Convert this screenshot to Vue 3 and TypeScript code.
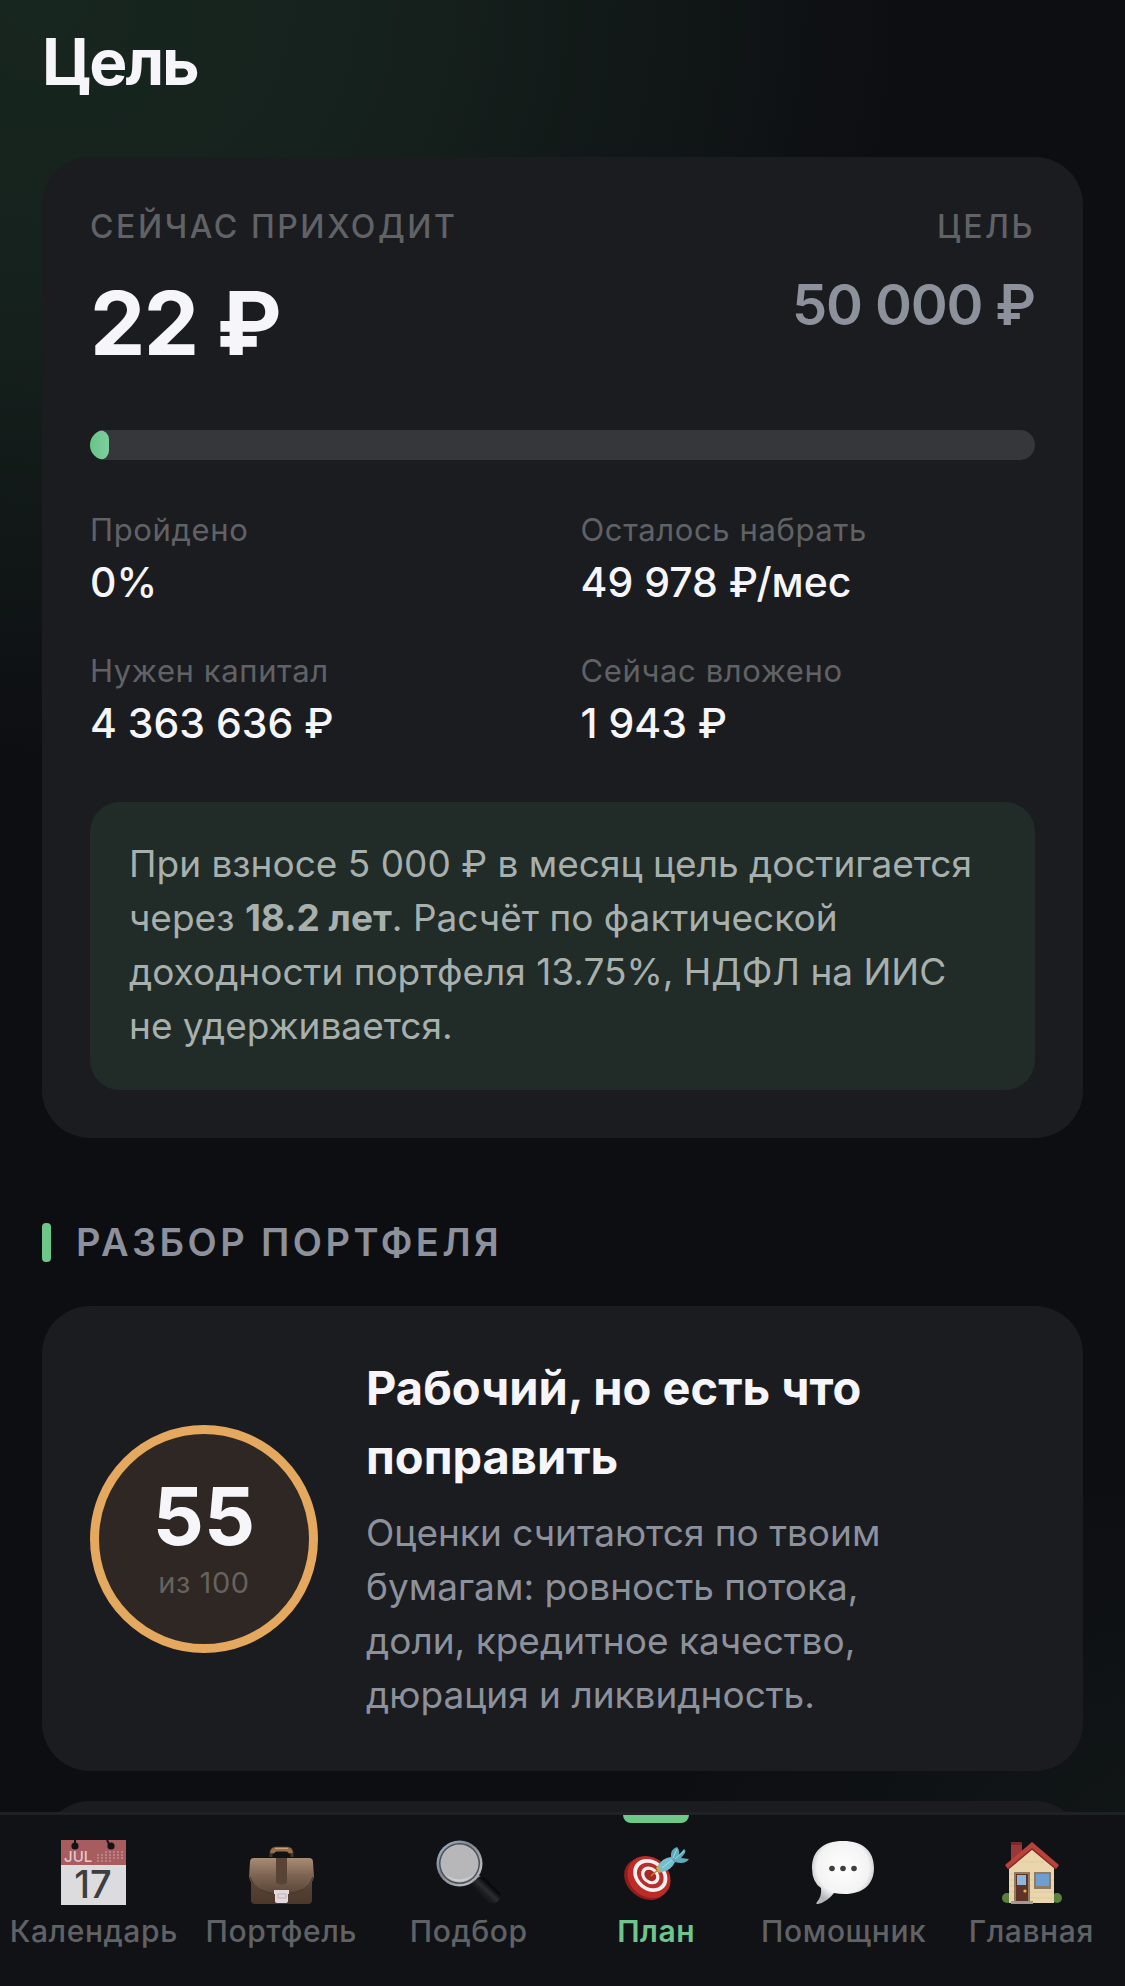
<script setup lang="ts">
interface Stat {
  label: string
  value: string
}

interface Tab {
  id: string
  label: string
  active?: boolean
}

const progress = 2

const stats: Stat[] = [
  { label: 'Пройдено', value: '0%' },
  { label: 'Осталось набрать', value: '49\u00a0978\u00a0₽/мес' },
  { label: 'Нужен капитал', value: '4\u00a0363\u00a0636\u00a0₽' },
  { label: 'Сейчас вложено', value: '1\u00a0943\u00a0₽' },
]

const tabs: Tab[] = [
  { id: 'calendar', label: 'Календарь' },
  { id: 'portfolio', label: 'Портфель' },
  { id: 'search', label: 'Подбор' },
  { id: 'plan', label: 'План', active: true },
  { id: 'assistant', label: 'Помощник' },
  { id: 'home', label: 'Главная' },
]
</script>

<template>
  <div class="app">
    <main class="content">
      <h1 class="title">Цель</h1>

      <section class="card goal">
        <div class="goal-head">
          <div>
            <div class="caption">Сейчас приходит</div>
            <div class="now">22&nbsp;₽</div>
          </div>
          <div class="goal-target">
            <div class="caption">Цель</div>
            <div class="target">50&nbsp;000&nbsp;₽</div>
          </div>
        </div>
        <div class="track" role="progressbar" :aria-valuenow="progress" aria-valuemin="0" aria-valuemax="100">
          <div class="fill" :style="{ width: progress + '%' }"></div>
        </div>
        <dl class="stats">
          <div v-for="s in stats" :key="s.label">
            <dt>{{ s.label }}</dt>
            <dd>{{ s.value }}</dd>
          </div>
        </dl>
        <p class="note">
          При взносе 5&nbsp;000&nbsp;₽ в месяц цель достигается через <b>18.2 лет</b>. Расчёт по фактической
          доходности портфеля 13.75%, НДФЛ на ИИС не&nbsp;удерживается.
        </p>
      </section>

      <h2 class="section-title">Разбор портфеля</h2>

      <section class="card review">
        <div class="score">
          <span class="score-value">55</span>
          <span class="score-max">из 100</span>
        </div>
        <div class="review-text">
          <h3>Рабочий, но есть что поправить</h3>
          <p>Оценки считаются по твоим бумагам: ровность потока, доли, кредитное качество, дюрация и ликвидность.</p>
        </div>
      </section>

      <section class="card next"></section>
    </main>

    <nav class="tabs">
      <a v-for="t in tabs" :key="t.id" href="#" class="tab" :class="{ active: t.active }">
        <svg v-if="t.id === 'calendar'" class="icon" viewBox="0 0 65 65" aria-hidden="true">
          <rect width="65" height="65" fill="#dcdcde" />
          <rect width="65" height="25" fill="#a75c60" />
          <path d="M14 0v6M46 0l3 6" stroke="#1a1416" stroke-width="2" />
          <circle cx="14" cy="6" r="3.6" fill="#151214" />
          <circle cx="50" cy="6" r="3.6" fill="#151214" />
          <text x="3" y="22" font-size="15" fill="#e3c9cb">JUL</text>
          <path
            d="M44 12h18M36 15h26M36 18h26M36 21h14"
            stroke="#c58d90"
            stroke-width="1.4"
            stroke-dasharray="2 2"
          />
          <text x="32" y="58" font-size="38" font-weight="500" text-anchor="middle" fill="#3e3e40">17</text>
        </svg>

        <svg v-else-if="t.id === 'portfolio'" class="icon" viewBox="0 0 65 65" aria-hidden="true">
          <defs>
            <linearGradient id="bag" x1="0" y1="0" x2="0" y2="1">
              <stop offset="0" stop-color="#a88d75" />
              <stop offset=".5" stop-color="#7b6350" />
              <stop offset="1" stop-color="#5a4538" />
            </linearGradient>
            <linearGradient id="bagBody" x1="0" y1="0" x2="0" y2="1">
              <stop offset="0" stop-color="#644e40" />
              <stop offset="1" stop-color="#4b382c" />
            </linearGradient>
          </defs>
          <path d="M22 17v-4q0-5 5-5h11q5 0 5 5v4" fill="none" stroke="#4a3424" stroke-width="3" />
          <path d="M21 13q1-6 6-6h11q5 0 6 6l-4 .5q-1-2-3-2h-9q-2 0-3 2z" fill="#94704f" />
          <path d="M26 8.500h13" stroke="#c9a27b" stroke-width="1" />
          <path d="M2 24h61v36q0 4-4 4H6q-4 0-4-4z" fill="url(#bagBody)" />
          <path d="M5 18h55q4 0 4 4l1 15q-4 16-31 17h-4Q4 53 0 37l1-15q0-4 4-4z" fill="url(#bag)" />
          <path d="M1 37q4 16 29 17h4q26-1 30-17" fill="none" stroke="#463429" stroke-width="1" />
          <path d="M27 18h11v25q-5 3-11 0z" fill="#594335" />
          <path d="M25 50h15v4h-1v7q0 2-3 2h-7q-3 0-3-2v-7h-1z" fill="#e2d9dd" />
          <path d="M29 54h8v4h-8z" fill="none" stroke="#bdb2b8" stroke-width="1" />
        </svg>

        <svg v-else-if="t.id === 'search'" class="icon" viewBox="0 0 65 65" aria-hidden="true">
          <defs>
            <linearGradient id="rim" x1="0" y1="0" x2="1" y2="1">
              <stop offset="0" stop-color="#a5bbd6" />
              <stop offset=".4" stop-color="#7d8791" />
              <stop offset=".8" stop-color="#b9babf" />
              <stop offset="1" stop-color="#5a5b60" />
            </linearGradient>
            <linearGradient id="grip" x1=".2" y1=".8" x2=".8" y2=".2">
              <stop offset="0" stop-color="#5a5a5d" />
              <stop offset=".25" stop-color="#161719" />
              <stop offset=".5" stop-color="#2c2d31" />
              <stop offset=".75" stop-color="#08080a" />
              <stop offset="1" stop-color="#1c1d20" />
            </linearGradient>
          </defs>
          <path d="M38 39l5-4 4 4-6 6z" fill="#85868b" />
          <path d="M43 37q3-2 7 1l13 14q4 4 0 8-4 5-9 3L37 46q-2-3 0-5z" fill="url(#grip)" />
          <circle cx="23.500" cy="23.500" r="23" fill="url(#rim)" />
          <circle cx="23.500" cy="23.500" r="20.500" fill="#4b4f56" />
          <circle cx="23.500" cy="23.500" r="19" fill="#b7b7ba" />
          <path d="M9 34a18 18 0 0 0 29 0A22 22 0 0 1 9 34z" fill="#cececf" />
        </svg>

        <svg v-else-if="t.id === 'plan'" class="icon" viewBox="0 0 65 65" aria-hidden="true">
          <g transform="rotate(40 25 37)">
            <ellipse cx="24" cy="41" rx="23.500" ry="18.500" fill="#8f1d1b" />
            <ellipse cx="25" cy="37" rx="23" ry="19.500" fill="#bd2b27" />
            <ellipse cx="25" cy="35" rx="18.500" ry="15" fill="#f4eff0" />
            <ellipse cx="25" cy="35" rx="14.500" ry="11.500" fill="#b72f2c" />
            <ellipse cx="25" cy="35" rx="10" ry="8" fill="#f4eff0" />
            <ellipse cx="25" cy="35" rx="6.500" ry="5" fill="#a72925" />
          </g>
          <path d="M27 36l9-8" stroke="#b98a30" stroke-width="1.500" />
          <path d="M32 28l3-4 5 7-5 2z" fill="#d7a43b" />
          <path d="M34 26q4-8 13-9l4 5q-4 9-14 10z" fill="#72c0ce" />
          <path d="M47 18q-1-9 6-11 3 3 2 8l5-6q2 1 1 4l-4 5 8 1q-4 6-14 3z" fill="#5faabb" />
          <path d="M49 18l4-9M51 19l9-8M38 28l10-8" fill="none" stroke="#a3dde4" stroke-width="1" />
        </svg>

        <svg v-else-if="t.id === 'assistant'" class="icon" viewBox="0 0 65 65" aria-hidden="true">
          <defs>
            <radialGradient id="bubble" cx=".5" cy=".42" r=".58">
              <stop offset="0" stop-color="#ffffff" />
              <stop offset=".72" stop-color="#f3f3f4" />
              <stop offset="1" stop-color="#b5b5b9" />
            </radialGradient>
          </defs>
          <path
            d="M32 1c20 0 31 10 31 27S51 54 34 54q-6 0-11-1Q16 62 7 64q-3 0-1-2 5-6 4-14Q1 42 1 28C1 11 12 1 32 1z"
            fill="url(#bubble)"
          />
          <circle cx="21" cy="28.500" r="2.800" fill="#3e3e41" />
          <circle cx="32" cy="28.500" r="2.800" fill="#3e3e41" />
          <circle cx="43" cy="28.500" r="2.800" fill="#3e3e41" />
        </svg>

        <svg v-else class="icon" viewBox="0 0 65 65" aria-hidden="true">
          <rect x="12" y="2" width="11" height="22" fill="#99383a" />
          <rect x="12" y="2" width="11" height="3" fill="#7a2a28" />
          <circle cx="8" cy="58" r="5" fill="#5b8040" />
          <circle cx="58" cy="58" r="5" fill="#5b8040" />
          <path d="M10 26L33 7l22 19v37H10z" fill="#ead6ad" />
          <path d="M10 34h45M10 40h45M10 46h45M10 52h45M10 58h45M22 22h23" stroke="#dfcaa1" stroke-width="1" />
          <path d="M33 2L6 25l3 4L33 9l24 20 3-4z" fill="#b9423b" />
          <path d="M9 29L33 9l24 20" fill="none" stroke="#852a26" stroke-width="1.500" />
          <rect x="15" y="32" width="16" height="30" fill="#8e7b62" />
          <rect x="17" y="34" width="12" height="28" fill="#5f3326" />
          <rect x="18" y="35" width="9" height="10" fill="#8eb7dd" />
          <circle cx="26" cy="51" r="1.600" fill="#e9b93f" />
          <rect x="35" y="32" width="17" height="17" fill="#8e7b62" />
          <rect x="37" y="34" width="13" height="12" fill="#6f9fd1" />
          <path d="M12 61h22v3H12z" fill="#a29a90" />
        </svg>
        <span>{{ t.label }}</span>
      </a>
    </nav>
  </div>
</template>

<style>
body {
  margin: 0;
  background: #0d0e13;
}
</style>

<style scoped>
.app {
  display: flex;
  flex-direction: column;
  height: 100vh;
  overflow: hidden;
  color: #f5f5fa;
  font-family: Inter, 'Noto Sans', sans-serif;
  background:
    radial-gradient(
      ellipse 860px 760px at 4% 0%,
      rgba(94, 200, 120, 0.13),
      rgba(94, 200, 120, 0.1) 40%,
      rgba(94, 200, 120, 0.05) 70%,
      transparent
    ),
    radial-gradient(ellipse 560px 400px at 108% 94%, rgba(94, 200, 120, 0.05), transparent),
    #0d0e12;
}

.content {
  flex: 1;
  min-height: 0;
  overflow-y: auto;
  scrollbar-width: none;
  box-sizing: border-box;
  padding: 22px 42px 0;
}

.title {
  margin: 0 0 55px;
  font-size: 64px;
  line-height: 80px;
  font-weight: 700;
  letter-spacing: -0.03em;
}

.card {
  box-sizing: border-box;
  padding: 48px;
  border-radius: 48px;
  background: #1b1c20;
}

.goal-head {
  display: flex;
  justify-content: space-between;
  align-items: flex-start;
}

.goal-target {
  text-align: right;
}

.caption {
  margin-bottom: 8px;
  font-size: 32px;
  line-height: 44px;
  font-weight: 500;
  letter-spacing: 0.08em;
  text-transform: uppercase;
  color: #606266;
}

.now {
  font-size: 88px;
  line-height: 132px;
  font-weight: 700;
  letter-spacing: -0.02em;
}

.target {
  font-size: 56px;
  line-height: 96px;
  font-weight: 600;
  letter-spacing: -0.02em;
  color: #8d919b;
}

.track {
  height: 30px;
  margin-top: 41px;
  overflow: hidden;
  border-radius: 15px;
  background: #36373b;
}

.fill {
  height: 100%;
  border-radius: 15px;
  background: linear-gradient(90deg, #66c586, #80cf9e);
}

.stats {
  display: grid;
  grid-template-columns: 1fr 1fr;
  gap: 36px;
  margin: 48px 0;
}

.stats dt {
  font-size: 31px;
  line-height: 44px;
  letter-spacing: 0.02em;
  color: #606266;
}

.stats dd {
  margin: 0;
  font-size: 41px;
  line-height: 61px;
  font-weight: 500;
}

.note {
  margin: 0;
  padding: 35px 39px 37px;
  border-radius: 30px;
  background: #212b28;
  font-size: 37px;
  line-height: 54px;
  color: #a7b0ad;
}

.section-title {
  display: flex;
  align-items: center;
  gap: 25px;
  margin: 84px 0 44px;
  font-size: 38px;
  line-height: 40px;
  font-weight: 600;
  letter-spacing: 0.09em;
  text-transform: uppercase;
  color: #8d919b;
}

.section-title::before {
  content: '';
  width: 9px;
  height: 39px;
  border-radius: 4px;
  background: #6cc788;
}

.review {
  display: flex;
  align-items: center;
  gap: 48px;
  padding: 47px 48px;
}

.review-text {
  padding-bottom: 2px;
}

.score {
  box-sizing: border-box;
  display: flex;
  flex: none;
  flex-direction: column;
  align-items: center;
  justify-content: center;
  gap: 9px;
  width: 228px;
  height: 228px;
  border: 9px solid #e5a85f;
  border-radius: 50%;
  background: #2e2723;
}

.score-value {
  font-size: 80px;
  line-height: 80px;
  font-weight: 700;
}

.score-max {
  font-size: 29px;
  line-height: 36px;
  letter-spacing: 0.02em;
  color: #66625f;
}

.review h3 {
  margin: 0 0 15px;
  font-size: 47px;
  line-height: 69px;
  font-weight: 700;
}

.review p {
  max-width: 560px;
  margin: 0;
  font-size: 37px;
  line-height: 54px;
  color: #8d919b;
}

.next {
  height: 360px;
  margin-top: 30px;
}

.tabs {
  display: grid;
  flex: none;
  grid-template-columns: repeat(6, 1fr);
  border-top: 3px solid #202125;
  background: #111216;
}

.tab {
  position: relative;
  display: flex;
  flex-direction: column;
  align-items: center;
  gap: 8px;
  padding: 25px 0 37px;
  font-size: 30px;
  line-height: 36px;
  font-weight: 500;
  letter-spacing: 0.02em;
  color: #606266;
  text-decoration: none;
}

.tab.active {
  font-weight: 600;
  color: #6fc58c;
}

.tab.active::before {
  content: '';
  position: absolute;
  top: 0;
  width: 66px;
  height: 8px;
  border-radius: 0 0 8px 8px;
  background: #6cc788;
}

.icon {
  width: 65px;
  height: 65px;
  overflow: visible;
  letter-spacing: 0;
}
</style>
